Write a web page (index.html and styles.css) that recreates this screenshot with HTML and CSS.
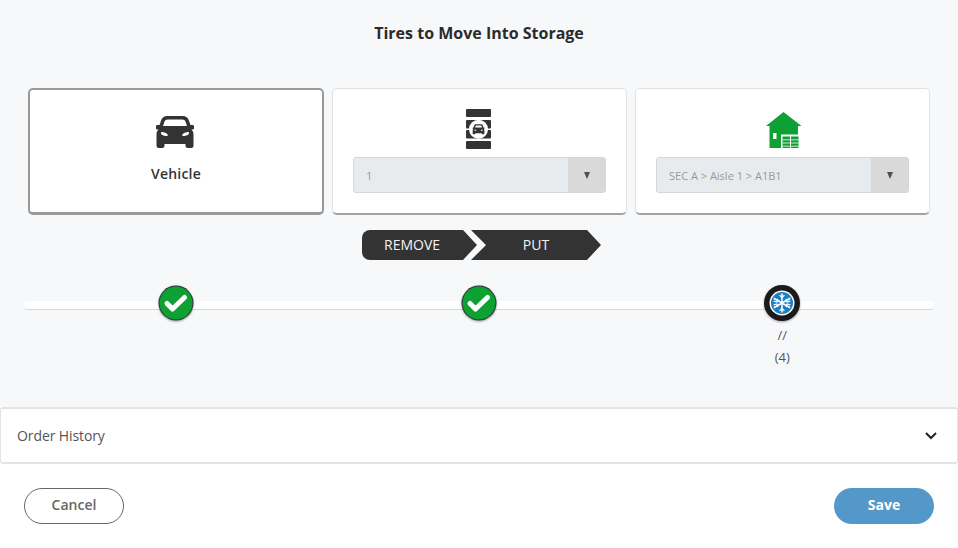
FILE: index.html
```html
<!DOCTYPE html>
<html lang="en">
<head>
    <meta charset="UTF-8">
    <meta name="viewport" content="width=device-width, initial-scale=1.0">
    <title>Tires to Move Into Storage</title>
    <link rel="stylesheet" href="styles.css">
</head>
<body>
    <div class="mainbody">
        <h2 class="title">Tires to Move Into Storage</h2>

        <div class="cards">
            <div class="card card-active">
                <svg class="car-icon" viewBox="0 0 38 32" width="38" height="32">
                    <path fill="#333" fill-rule="evenodd" d="M11 0h16c2.500 0 4.500 1.200 5.500 3.500L34.500 9h2a1.500 1.500 0 0 1 0 4.500H35.500c1.500 1.500 2 3 2 5V29.500a2.500 2.500 0 0 1-2.500 2.500h-3a2.500 2.500 0 0 1-2.500-2.500V28h-21v1.500A2.500 2.500 0 0 1 6 32H3a2.500 2.500 0 0 1-2.500-2.500V18.500c0-2 .5-3.500 2-5H1.500a1.500 1.500 0 0 1 0-4.500h2l2-5.500C6.500 1.200 8.500 0 11 0zM12 3.500C10 3.500 9 4.200 8.500 5.500L7 10h24l-1.500-4.500C29 4.200 28 3.500 26 3.500zM5 16.500c-.5 1.800 2.500 3.500 6 3.500 1 0 1-1.500 0-2.200-1.500-1-3.500-1.800-5-1.800-.5 0-.9.100-1 .5zM33 16.500c-.1-.4-.5-.5-1-.5-1.500 0-3.500.8-5 1.800-1 .7-1 2.200 0 2.200 3.500 0 6.500-1.700 6-3.500z"/>
                </svg>
                <div class="card-label">Vehicle</div>
            </div>

            <div class="card">
                <svg class="tire-icon" viewBox="0 0 25 40" width="25" height="40">
                    <rect x="0" y="0" width="25" height="8" rx="1" fill="#333"/>
                    <rect x="0" y="11" width="25" height="8.500" rx="1" fill="#333"/>
                    <rect x="0" y="21" width="25" height="8.500" rx="1" fill="#333"/>
                    <rect x="0" y="32" width="25" height="8" rx="1" fill="#333"/>
                    <circle cx="12.500" cy="20.300" r="9.500" fill="#fff"/>
                    <g transform="translate(1.300 1.200) scale(.9)">
                        <path fill="#333" fill-rule="evenodd" d="M9.500 15.500h6c1 0 1.500.5 1.800 1.500l.7 2.200h1v1.300l-.5.300c.3.400.5.900.5 1.500v3.700a.8.800 0 0 1-.8.800h-1.400a.8.800 0 0 1-.8-.8V25.500h-7v.5a.8.800 0 0 1-.8.800H6.800a.8.800 0 0 1-.8-.8v-3.700c0-.6.200-1.100.5-1.500L6 20.500v-1.300h1l.7-2.200c.3-1 .8-1.500 1.800-1.500zM9.800 17c-.3 0-.5.200-.6.500l-.5 1.700h7.600l-.5-1.700c-.1-.3-.3-.5-.6-.5zM8 21.500v1.300h2v-.7zM17 21.500l-2 .6v.7h2z"/>
                    </g>
                </svg>
                <div class="select-box">
                    <span class="select-value">1</span>
                    <span class="select-arrow"></span>
                </div>
            </div>

            <div class="card">
                <svg class="house-icon" viewBox="0 0 36 36" width="36" height="36">
                    <path fill="#0ca132" d="M17.500 0L35.500 14H32V22.500H15V36H3.500V14H0z"/>
                    <rect x="7" y="21" width="3.500" height="6" fill="#fff"/>
                    <path fill="#0ca132" d="M16.500 24.500h7.500V36h-7.500zM25 24.500h7.500V36H25z"/>
                    <path stroke="#fff" stroke-width=".8" d="M16.500 27.800h16M16.500 31h16M16.500 34.200h16"/>
                </svg>
                <div class="select-box">
                    <span class="select-value">SEC A &gt; Aisle 1 &gt; A1B1</span>
                    <span class="select-arrow"></span>
                </div>
            </div>
        </div>

        <div class="steps-nav">
            <div class="step-tab step-remove">REMOVE</div>
            <div class="step-tab step-put">PUT</div>
        </div>

        <div class="track">
            <div class="track-line"></div>
            <div class="track-step">
                <svg class="step-icon" viewBox="0 0 36 36" width="36" height="36">
                    <circle cx="18" cy="18" r="17.500" fill="#333"/>
                    <circle cx="18" cy="18" r="16.500" fill="#0ca132"/>
                    <path fill="none" stroke="#fff" stroke-width="5" stroke-linecap="round" stroke-linejoin="round" d="M9 18.500l5.500 5.500L26.500 12.500"/>
                </svg>
            </div>
            <div class="track-step">
                <svg class="step-icon" viewBox="0 0 36 36" width="36" height="36">
                    <circle cx="18" cy="18" r="17.500" fill="#333"/>
                    <circle cx="18" cy="18" r="16.500" fill="#0ca132"/>
                    <path fill="none" stroke="#fff" stroke-width="5" stroke-linecap="round" stroke-linejoin="round" d="M9 18.500l5.500 5.500L26.500 12.500"/>
                </svg>
            </div>
            <div class="track-step">
                <svg class="step-icon" viewBox="0 0 36 36" width="36" height="36">
                    <circle cx="18" cy="18" r="18" fill="#1a1a1a"/>
                    <circle cx="18" cy="18" r="12.500" fill="#fff"/>
                    <circle cx="18" cy="18" r="11" fill="#1c7fc4"/>
                    <g fill="none" stroke="#fff" stroke-width="1.500">
                        <path d="M18 8.500v19M9.800 13.250l16.400 9.500M9.800 22.750l16.400-9.500"/>
                        <path stroke-width="1.200" d="M15.600 10.200l2.400 2.400 2.400-2.400M15.600 25.800l2.400-2.400 2.400 2.400M9.700 16.200l3.300.9.900-3.300M26.300 19.800l-3.300-.9-.9 3.300M9.700 19.800l3.300-.9.900 3.300M26.300 16.200l-3.300.9-.9-3.300"/>
                    </g>
                </svg>
                <div class="step-text">//</div>
                <div class="step-text">(4)</div>
            </div>
        </div>
    </div>

    <div class="accordion">
        <span class="accordion-label">Order History</span>
        <svg class="chevron" viewBox="0 0 12 8" width="12" height="8">
            <path fill="none" stroke="#222" stroke-width="2" d="M1 1l5 5 5-5"/>
        </svg>
    </div>

    <div class="footer">
        <button class="button cancel-button">Cancel</button>
        <button class="button save-button">Save</button>
    </div>
</body>
</html>
```

FILE: styles.css
```css
html, body {
    margin: 0;
    padding: 0;
}

body {
    width: 958px;
    height: 548px;
    overflow: hidden;
    background-color: #fff;
    color: #333;
    font-family: "Open Sans", sans-serif;
}

.mainbody {
    height: 407px;
    box-sizing: border-box;
    padding-top: 22px;
    background-color: #f7f8fa;
}

.title {
    margin: 0;
    height: 22px;
    line-height: 22px;
    text-align: center;
    font-size: 16px;
    font-weight: 700;
    color: #2b2b2b;
}

.cards {
    display: grid;
    grid-template-columns: 296px 1fr 1fr;
    gap: 8px;
    margin: 44px 28px 0;
}

.card {
    height: 127px;
    box-sizing: border-box;
    padding: 20px 20px 0;
    display: flex;
    flex-direction: column;
    align-items: center;
    background-color: #fff;
    border: 1px solid #dfe1e3;
    border-bottom: 2px solid #a3a3a3;
    border-radius: 5px;
}

.card-active {
    padding-top: 26px;
    border: 2px solid #999;
    border-bottom-width: 3px;
}

.car-icon {
    display: block;
    margin-right: 2px;
}

.card-label {
    margin-top: 16px;
    line-height: 20px;
    font-size: 14px;
    font-weight: 600;
    letter-spacing: 0.2px;
    color: #333;
}

.tire-icon {
    display: block;
    margin: 0 2px 8px 0;
}

.house-icon {
    display: block;
    margin: 3px 0 9px 2px;
}

.select-box {
    display: flex;
    align-self: stretch;
    height: 36px;
    box-sizing: border-box;
    background-color: #e8ebee;
    border: 1px solid #d3d6da;
    border-radius: 3px;
    font-size: 11px;
    color: #999;
}

.select-value {
    flex: 1;
    padding-left: 12px;
    line-height: 36px;
}

.select-arrow {
    width: 37px;
    display: flex;
    align-items: center;
    justify-content: center;
    background-color: #d9d9d9;
    border-radius: 0 2px 2px 0;
}

.select-arrow::before {
    content: "";
    border-left: 3.500px solid transparent;
    border-right: 3.500px solid transparent;
    border-top: 7px solid #4a4f57;
}

.steps-nav {
    display: flex;
    justify-content: flex-start;
    margin: 15px 0 0 362px;
}

.step-tab {
    height: 30px;
    line-height: 30px;
    text-align: center;
    font-size: 14px;
    font-weight: 500;
    color: #f4f4f4;
    background-color: #333;
}

.step-remove {
    width: 115px;
    padding-right: 15px;
    box-sizing: border-box;
    border-radius: 8px 0 0 8px;
    clip-path: polygon(0 0, 101px 0, 100% 50%, 101px 100%, 0 100%);
}

.step-put {
    width: 130px;
    margin-left: -6px;
    box-sizing: border-box;
    clip-path: polygon(0 0, 116px 0, 100% 50%, 116px 100%, 0 100%, 15px 50%);
}

.track {
    position: relative;
    display: grid;
    grid-template-columns: repeat(3, 1fr);
    margin: 25px 24px 0;
}

.track-line {
    position: absolute;
    left: 0;
    right: 0;
    top: 16px;
    height: 9px;
    box-sizing: border-box;
    background-color: #fff;
    border-bottom: 1px solid #d8d8d8;
    border-radius: 4px;
}

.track-step {
    position: relative;
    display: flex;
    flex-direction: column;
    align-items: center;
}

.step-icon {
    display: block;
    margin-bottom: 3px;
    filter: drop-shadow(0 1px 1px rgba(0, 0, 0, 0.35));
}

.step-text {
    line-height: 22px;
    font-size: 13px;
    color: #555;
}

.accordion {
    height: 57px;
    box-sizing: border-box;
    display: flex;
    align-items: center;
    justify-content: space-between;
    padding: 0 20px 0 16px;
    background-color: #fff;
    border: 1px solid #e4e4e4;
    border-width: 2px 1px;
    border-radius: 3px;
    font-size: 14px;
    color: #555;
}

.accordion-label {
    letter-spacing: -0.1px;
}

.footer {
    display: flex;
    justify-content: space-between;
    padding: 24px 24px 0;
}

.button {
    width: 100px;
    height: 36px;
    padding: 0 0 3px;
    border-radius: 18px;
    font-family: "Open Sans", sans-serif;
    font-size: 14px;
    font-weight: 600;
}

.cancel-button {
    background-color: #fff;
    border: 1px solid #666;
    color: #666;
}

.save-button {
    background-color: #5398c9;
    border: none;
    color: #fff;
    font-weight: 700;
}
```
